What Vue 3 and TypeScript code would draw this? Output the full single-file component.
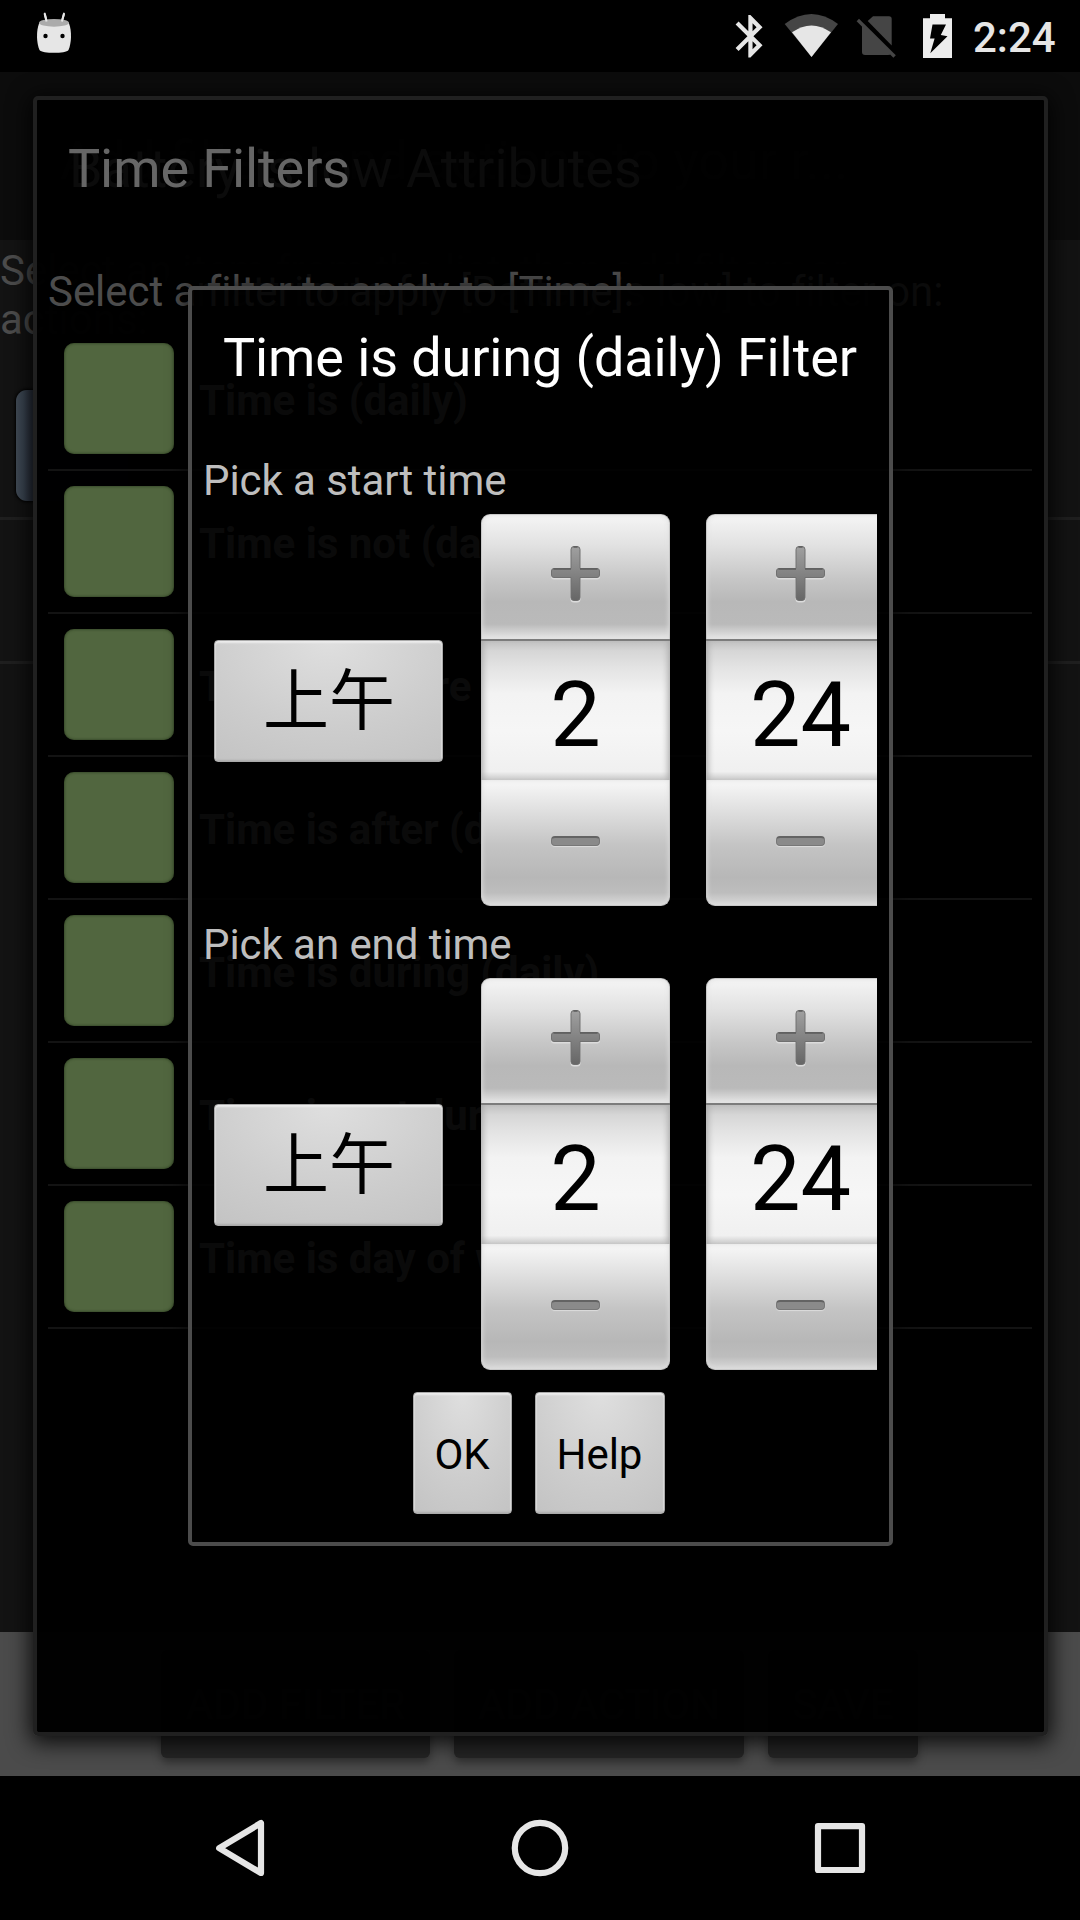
<script setup lang="ts">
interface TimeGroup {
  label: string
  period: string
  fields: string[]
}

const filters: string[] = [
  'Time is (daily)',
  'Time is not (daily)',
  'Time is before (daily)',
  'Time is after (daily)',
  'Time is during (daily)',
  'Time is not during (daily)',
  'Time is day of week',
]

const groups: TimeGroup[] = [
  { label: 'Pick a start time', period: '上午', fields: ['2', '24'] },
  { label: 'Pick an end time', period: '上午', fields: ['2', '24'] },
]
</script>

<template>
  <div class="screen">
    <header class="status">
      <svg class="droid" width="72" height="72" viewBox="18 0 72 72">
        <path d="M44.7 13.6 46.8 22M64 13.6 61.7 22" stroke="#e6e6e6" stroke-width="2" stroke-linecap="round" />
        <path d="M39.2 23C36 31 36.500 43 39.500 50 42 53.800 66 53.800 68.500 50 71.500 43 72 31 68.900 23Z" fill="#e6e6e6" />
        <ellipse cx="54" cy="22.800" rx="15" ry="3.900" fill="#ababab" />
        <path d="M44.700 14 46.600 21.400M64 14 61.900 21.400" stroke="#e6e6e6" stroke-width="2" />
        <circle cx="45.500" cy="36" r="2.200" fill="#000" />
        <circle cx="62.500" cy="36" r="2.200" fill="#000" />
      </svg>
      <div class="status-right">
        <svg width="52" height="72" viewBox="724 0 52 72">
          <path
            transform="translate(725 10.800) scale(2.120)"
            fill="#e6e6e6"
            d="M17.710 7.710L12 2h-1v7.590L6.410 5 5 6.410 10.590 12 5 17.590 6.410 19 11 14.410V22h1l5.710-5.710-4.300-4.290 4.300-4.290zM13 5.830l1.880 1.880L13 9.590V5.830zm1.880 10.460L13 18.170v-3.760l1.880 1.880z"
          />
        </svg>
        <svg width="72" height="72" viewBox="776 0 72 72">
          <path d="M811.500 57 784.700 24Q811.500 4 838 24Z" fill="#454545" />
          <path d="M811.500 57 792 32.300Q811.500 18.500 831 32.300Z" fill="#e6e6e6" />
        </svg>
        <svg width="64" height="72" viewBox="848 0 64 72">
          <path d="M867.700 21 873 16.300H889Q891.700 16.300 891.700 19V45.500Z" fill="#454545" />
          <path d="M862 25 891 53.500Q890.500 55 888 55H865Q862 55 862 52Z" fill="#454545" />
          <path d="M857.800 20 894.600 56.500" stroke="#454545" stroke-width="3.400" />
        </svg>
        <svg width="61" height="72" viewBox="912 0 61 72">
          <path d="M930 14h15v4.300h7V58h-29V18.300h7z" fill="#ececec" />
          <path d="M932.500 24.500H946L940.800 35 947.500 36.200 930.300 53.300 934.600 38.500H930Z" fill="#000" />
        </svg>
        <span class="clock">2:24</span>
      </div>
    </header>

    <main class="app">
      <div class="toolbar"><span>Add filters and actions to your r...</span></div>
      <div class="body">
        <p class="intro">Select an item from the list, then add filters or<br />actions:</p>
        <div class="entry"><div class="entry-icon"></div></div>
        <div class="entry"></div>
      </div>
      <div class="actions">
        <div class="action a1">ADD FILTER</div>
        <div class="action a2">ADD ACTION</div>
        <div class="action a3">SAVE</div>
      </div>
    </main>

    <nav class="nav">
      <svg width="1080" height="144" viewBox="0 1776 1080 144" fill="none" stroke="#e6e6e6" stroke-width="6.200" stroke-linejoin="round">
        <path d="M219.200 1848.200 261 1823V1873Z" />
        <circle cx="540" cy="1848" r="25.200" />
        <rect x="818" y="1826.200" width="44" height="43.800" />
      </svg>
    </nav>

    <section class="dialog outer">
      <div class="ghost ghost-title">Battery is low Attributes</div>
      <div class="ghost ghost-label">Select an attribute for [Battery is low] to filter on:</div>
      <h1 class="outer-title">Time Filters</h1>
      <p class="outer-label">Select a filter to apply to [Time]:</p>
      <ul class="list">
        <li v-for="f in filters" :key="f" class="row">
          <span class="swatch"></span>
          <span class="name">{{ f }}</span>
        </li>
      </ul>
    </section>

    <section class="dialog inner">
      <h2 class="inner-title">Time is during (daily) Filter</h2>
      <div v-for="g in groups" :key="g.label" class="group">
        <p class="group-label">{{ g.label }}</p>
        <div class="pickers">
          <button class="btn period">{{ g.period }}</button>
          <div v-for="(v, i) in g.fields" :key="i" class="picker">
            <div class="step up">
              <svg width="55" height="61" viewBox="0 0 55 61">
                <defs>
                  <linearGradient id="plusFill" x1="0" y1="0" x2="0" y2="1">
                    <stop offset="0" stop-color="#a0a0a0" />
                    <stop offset="1" stop-color="#666" />
                  </linearGradient>
                </defs>
                <path transform="translate(0 1.500)" fill="#dcdcdc" d="M26 3h3q3.500 0 3.500 3.500V25H49q3 0 3 3v4q0 3-3 3H32.500V54.500Q32.500 58 29 58H26q-3.500 0-3.500-3.500V35H6q-3 0-3-3V28q0-3 3-3H22.500V6.500Q22.500 3 26 3z" />
                <path fill="url(#plusFill)" stroke="#707070" stroke-width="1" d="M26 3.500h3q3 0 3 3V25.500H49q2.500 0 2.500 2.500v4q0 2.500-2.500 2.500H32V54.500Q32 57.500 29 57.500H26q-3 0-3-3V34.500H6q-2.500 0-2.500-2.500V28q0-2.500 2.500-2.500H23V6.500Q23 3.500 26 3.500z" />
                <path stroke="#5c5c5c" stroke-width="1.500" d="M5.500 26H23M32 26H49.500M25.500 4h4" />
              </svg>
            </div>
            <div class="value">{{ v }}</div>
            <div class="step down"><span class="minus"></span></div>
          </div>
        </div>
      </div>
      <div class="buttons">
        <button class="btn ok">OK</button>
        <button class="btn help">Help</button>
      </div>
    </section>
  </div>
</template>

<style>
body {
  margin: 0;
  background: #000;
}
</style>

<style scoped>
.screen {
  position: relative;
  width: 1080px;
  height: 1920px;
  overflow: hidden;
  display: flex;
  flex-direction: column;
  background: #000;
  font-family: Roboto, 'Noto Sans CJK SC', sans-serif;
}
h1,
h2,
p,
ul {
  margin: 0;
  padding: 0;
  font-weight: 400;
}
svg {
  display: block;
  flex: none;
}
.status {
  height: 72px;
  display: flex;
  justify-content: space-between;
  padding: 0 22px 0 18px;
  flex: none;
}
.status-right {
  display: flex;
}
.clock {
  width: 85px;
  font-size: 42px;
  font-weight: 500;
  line-height: 75px;
  color: #e6e6e6;
  white-space: nowrap;
}
.app {
  height: 1704px;
  display: flex;
  flex-direction: column;
  flex: none;
}
.toolbar {
  height: 168px;
  background: #0c0c0c;
  color: #555;
  font-size: 54px;
  line-height: 177px;
  padding-left: 60px;
  white-space: nowrap;
  flex: none;
}
.body {
  flex: 1;
  background: #131313;
}
.intro {
  padding-top: 6px;
  height: 122px;
  font-size: 42px;
  line-height: 49px;
  color: #4c4c4c;
  white-space: nowrap;
}
.entry {
  border-bottom: 3px solid #1f1f1f;
  box-sizing: border-box;
}
.entry:nth-child(2) {
  height: 152px;
}
.entry:nth-child(3) {
  height: 144px;
}
.entry-icon {
  width: 112px;
  height: 111px;
  margin: 0 0 0 16px;
  position: relative;
  top: 22px;
  border-radius: 11px;
  background: linear-gradient(90deg, #414b56, #3b4653 8px, #2c323f 16px);
  box-shadow: 0 0 3px 1px #000;
}
.actions {
  height: 144px;
  background: #4b4b4b;
  display: flex;
  gap: 24px;
  padding-left: 161px;
  box-sizing: border-box;
  flex: none;
}
.action {
  margin-top: 18px;
  height: 108px;
  border-radius: 6px;
  background: #252525;
  color: #666;
  font-size: 42px;
  line-height: 110px;
  text-align: center;
  white-space: nowrap;
  box-shadow: 0 5px 8px rgba(0, 0, 0, 0.35);
}
.a1 {
  width: 269px;
}
.a2 {
  width: 290px;
}
.a3 {
  width: 150px;
}
.nav {
  height: 144px;
  background: #000;
  flex: none;
}

.dialog {
  position: absolute;
  box-sizing: border-box;
  border-radius: 5px;
  display: flex;
  flex-direction: column;
}
.outer {
  left: 33px;
  top: 96px;
  width: 1015px;
  height: 1640px;
  border: 4px solid #202020;
  background: rgba(0, 0, 0, 0.985);
  background-clip: padding-box;
  box-shadow: 0 4px 22px 3px rgba(0, 0, 0, 0.85);
}
.ghost {
  position: absolute;
  color: #0b0b0b;
  white-space: nowrap;
}
.ghost-title {
  left: 32px;
  top: 37px;
  font-size: 54px;
  line-height: 64px;
}
.ghost-label {
  left: 11px;
  top: 167px;
  font-size: 42px;
  line-height: 50px;
  letter-spacing: -0.06px;
}
.outer-title {
  position: relative;
  margin: 37px 0 0 31px;
  font-size: 54px;
  line-height: 64px;
  letter-spacing: -0.1px;
  color: #666;
}
.outer-label {
  position: relative;
  margin: 66px 0 0 11px;
  font-size: 42px;
  line-height: 50px;
  letter-spacing: -0.05px;
  color: #4c4c4c;
}
.list {
  list-style: none;
  margin: 11px 12px 0 11px;
}
.row {
  height: 143px;
  box-sizing: border-box;
  border-bottom: 2px solid #131313;
  display: flex;
  padding: 15px 0 0 16px;
}
.swatch {
  width: 110px;
  height: 111px;
  border-radius: 10px;
  background: #51663f;
  box-shadow: inset 0 0 3px rgba(30, 45, 20, 0.9);
}
.name {
  margin-left: 25px;
  font-size: 42px;
  font-weight: 700;
  line-height: 115px;
  color: #4c4c4c;
}

.inner {
  left: 188px;
  top: 286px;
  width: 705px;
  height: 1260px;
  border: 4px solid #4c4c4c;
  background: rgba(0, 0, 0, 0.86);
  background-clip: padding-box;
  box-shadow: 0 3px 20px 1px rgba(0, 0, 0, 0.75);
  padding: 0 12px;
}
.inner-title {
  margin: 36px 0 66px 19px;
  font-size: 54px;
  line-height: 64px;
  letter-spacing: -0.12px;
  color: #fff;
  white-space: nowrap;
}
.group {
  height: 464px;
  overflow: hidden;
  flex: none;
}
.group-label {
  margin-left: -1px;
  font-size: 42px;
  line-height: 50px;
  letter-spacing: -0.06px;
  color: #bebebe;
  padding-bottom: 8px;
}
.pickers {
  display: flex;
  align-items: flex-start;
}
.btn {
  box-sizing: border-box;
  height: 122px;
  padding: 0;
  border: 1px solid #aaa;
  border-radius: 4px;
  background: radial-gradient(ellipse 90% 120% at 50% 0, #dfdfdf, #cdcdcd 60%, #c3c3c3);
  box-shadow: inset 0 3px 2px -1px #ededed, inset 0 -2px 2px -1px #aaa, inset 1px 0 1px #ddd, inset -1px 0 1px #ddd;
  font-family: Roboto, 'Noto Sans CJK SC', sans-serif;
  font-size: 42px;
  color: #000;
  flex: none;
}
.period {
  width: 229px;
  margin: 126px 38px 0 10px;
  padding: 2px 0 0 1px;
  font-size: 66px;
  line-height: 110px;
  font-weight: 400;
}
.picker {
  width: 189px;
  height: 393px;
  margin-right: 36px;
  flex: none;
}
.step {
  box-sizing: border-box;
  display: flex;
  justify-content: center;
  border: 1px solid #c8c8c8;
  box-shadow: inset 0 0 5px #ddd;
}
.up {
  height: 125px;
  padding: 28px 1px 0 0;
  border-radius: 9px 9px 0 0;
  border-bottom: 0;
  background: linear-gradient(#f5f5f5, #e2e2e2 24%, #c6c6c6 52%, #b8b8b8 70%, #bababa 88%, #d8d8d8 96%, #e8e8e8);
}
.value {
  box-sizing: border-box;
  height: 141px;
  border-top: 2px solid #7c7c7c;
  background: linear-gradient(#c0c0c0, #d6d6d6 7%, #e4e4e4 20%, #f3f3f3 38%, #f6f6f6 65%, #f0f0f0 94%, #c8c8c8);
  box-shadow: inset 7px 0 6px -5px #aaa, inset -7px 0 6px -5px #aaa;
  font-size: 90px;
  line-height: 150px;
  text-align: center;
  color: #000;
}
.down {
  height: 126px;
  padding: 56px 1px 0 0;
  border-radius: 0 0 9px 9px;
  border-top: 0;
  background: linear-gradient(#f8f8f8, #e4e4e4 20%, #c4c4c4 52%, #b7b7b7 78%, #bdbdbd 90%, #dadada);
}
.minus {
  box-sizing: border-box;
  width: 49px;
  height: 10px;
  border: 1px solid #777;
  border-top: 2px solid #636363;
  border-radius: 4px;
  background: #8a8a8a;
  box-shadow: 0 1px 1px #ddd;
}
.buttons {
  display: flex;
  gap: 23px;
  margin: 8px 0 0 209px;
}
.buttons .btn {
  padding: 2px 1px 0 0;
  letter-spacing: -0.05px;
}
.ok {
  width: 99px;
}
.help {
  width: 130px;
}
</style>
